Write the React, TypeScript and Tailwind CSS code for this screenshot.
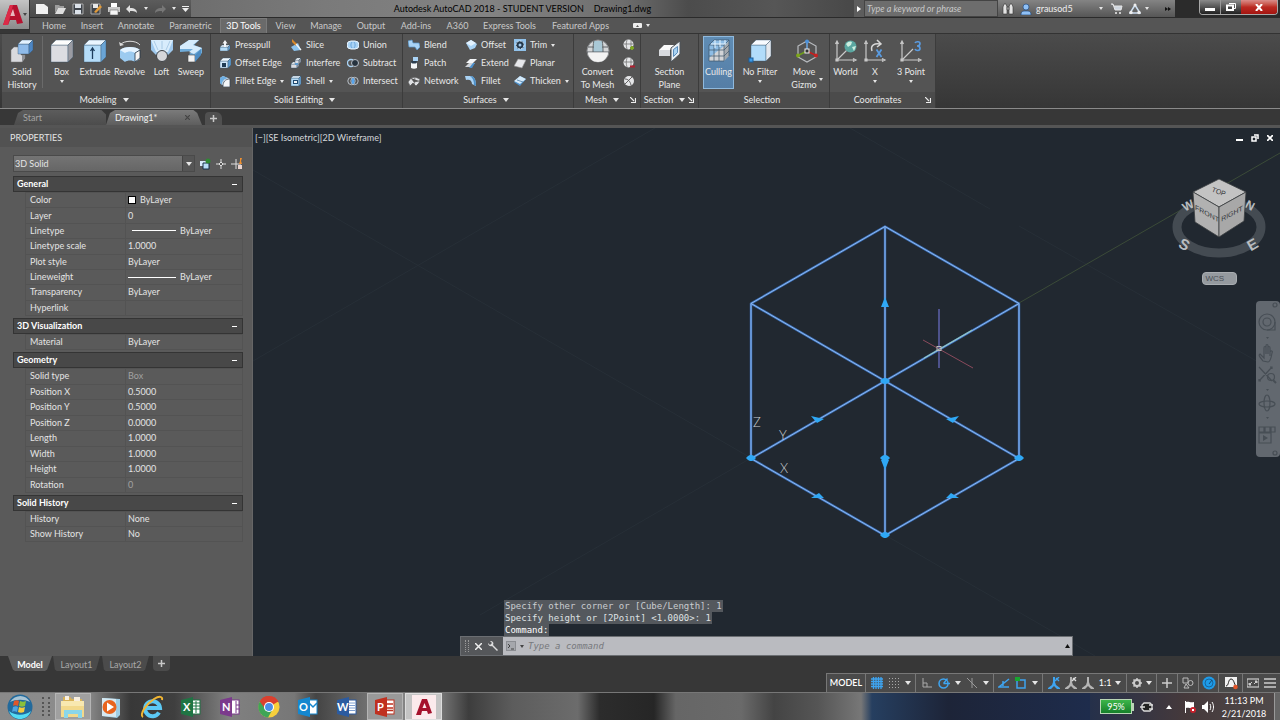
import React from "react";

type Kids = { children?: React.ReactNode };

const L = "#f4f6f8";
const G = "#b9c0c8";
const B = "#a9d3f5";
const D = "#5b9bd0";

function Svg({ s = 24, children }: Kids & { s?: number }) {
  const size = s === 24 ? "h-6 w-6" : s === 12 ? "h-3 w-3" : "h-3.5 w-3.5";
  return (
    <svg viewBox={`0 0 ${s} ${s}`} className={`${size} shrink-0`} aria-hidden="true">
      {children}
    </svg>
  );
}

function Block({ x, y, w, h, d, c }: { x: number; y: number; w: number; h: number; d: number; c: string[] }) {
  return (
    <g stroke="#33506b" strokeWidth=".4">
      <path d={`M${x} ${y + d}h${w}v${h}h${-w}z`} fill={c[0]} />
      <path d={`M${x} ${y + d}l${d} ${-d}h${w}l${-d} ${d}z`} fill={c[1]} />
      <path d={`M${x + w} ${y + d}l${d} ${-d}v${h}l${-d} ${d}z`} fill={c[2]} />
    </g>
  );
}
const white = ["#dcdde2", "#fdfdfd", "#9a9ba2"];
const blue = ["#b5dcf8", "#eaf6ff", "#6aa5d6"];

const big: Record<string, React.ReactNode> = {
  history: (
    <>
      <path d="M1 11l3-3h7v8h4v3l-3 4H1z" fill="#d9dade" stroke="#777" strokeWidth=".5" />
      <path d="M12 23l3-4v-3h-3z" fill="#8e9096" />
      <Block x={8} y={1} w={11} h={10} d={4} c={["#8fbbea", "#e3f2ff", "#4d86c4"]} />
    </>
  ),
  box: <Block x={1} y={1} w={17} h={17} d={5} c={white} />,
  extrude: (
    <>
      <Block x={1} y={1} w={17} h={17} d={5} c={blue} />
      <path d="M9.500 20V10M7.500 12l2-3 2 3" stroke="#1d3c5c" strokeWidth="1.300" fill="none" />
    </>
  ),
  revolve: (
    <>
      <path d="M2 6C6 1 18 1 22 6" fill="none" stroke="#ddd" strokeWidth="1" />
      <path d="M1 3l1 4 4-1z" fill="#ddd" />
      <path d="M2 11c4-4 16-4 20 0v9l-5 3c-2-2-8-2-10 0l-5-4z" fill="#9ccbf0" />
      <path d="M2 11c4-4 16-4 20 0l-5 3c-3-2-7-2-10 0z" fill="#e4f3ff" />
      <path d="M17 14l5-3v8l-5 4z" fill="#f4f4f4" stroke="#234" strokeWidth=".8" />
    </>
  ),
  loft: (
    <>
      <path d="M1 1h22v10l-6 6H7l-6-6z" fill="#9fc9ee" />
      <path d="M1 1h22l-5 12H6z" fill="#d8ecfc" />
      <path d="M4 2l4 9M20 2l-4 9M12 2v8" stroke="#9fc3e0" strokeWidth=".8" />
      <circle cx="12" cy="17" r="5.500" fill="#d5d7db" stroke="#3f4347" strokeWidth="1" />
    </>
  ),
  sweep: (
    <>
      <path d="M1 7l9-6h10l-5 5 8 3v5l-8 8-5-7 5-3-14 1z" fill="#70acd9" />
      <path d="M1 7l9-6h10l-6 5 9 3-8 6-5-2 4-3-13 0z" fill="#d4ebfc" />
      <path d="M9 16h7v7H9z" fill="#f4f4f4" stroke="#444" strokeWidth=".6" />
      <path d="M16 16l6-6v6l-6 7z" fill="#4f8ec4" />
    </>
  ),
  mesh: (
    <>
      <circle cx="12" cy="12" r="11" fill="#d4d6d8" stroke="#8b8d90" strokeWidth="1" />
      <path d="M8 2h8l1 11H7z" fill="#a9c8d6" />
      <path d="M2 8h6M16 8h6M1 13h22M8 1C7 6 7 9 7 13M16 1c1 5 1 8 1 12" stroke="#555a5e" strokeWidth=".9" fill="none" />
      <path d="M2 13.500h20C21 20 17 23 12 23S3 20 2 13.500z" fill="#f3f3f3" />
    </>
  ),
  section: (
    <>
      <path d="M1 11l5-5h11l-5 5v6H1z" fill="#fafafa" />
      <path d="M1 11h11v6H1z" fill="#d8dade" />
      <path d="M13 9l9-7v13l-9 8z" fill="#e9eff5" stroke="#4d5358" strokeWidth="1" />
      <path d="M15.500 10.500l4-3v6l-4 4z" fill="#a8d2f3" stroke="#3d77ad" strokeWidth=".8" />
    </>
  ),
  culling: (
    <>
      <path d="M2 6l5-5h15v15l-5 6H2z" fill="#9bcaf3" opacity=".8" />
      <path d="M2 22v-3l15-12v15z" fill="#d2d4d7" />
      <path d="M17 7l5-5v15l-5 5z" fill="#a4a9ae" />
      <path d="M2 6h15v16H2zM7 1h15v16M17 6l5-5M2 6l5-5M7 6v16M12 6v16M2 11h15l5-5M2 17h15l5-5" stroke="#3e5568" strokeWidth=".7" fill="none" />
      <path d="M8 1v8M13 1v7M18 1v4M4 5h15" stroke="#e6f4ff" strokeWidth="1" />
    </>
  ),
  filter: (
    <>
      <Block x={3} y={1} w={15} h={16} d={5} c={["#b2dcfa", "#f8fbff", "#e4e8ee"]} />
      <rect x="1" y="19" width="4" height="4" fill="#3e9be8" stroke="#1b5c99" />
    </>
  ),
  gizmo: (
    <>
      <path d="M12 2l9 5v11l-9 5-9-5V7zM12 2v10" fill="none" stroke="#b9bcc0" strokeWidth="1.200" />
      <path d="M12 4v7" stroke="#4c93dd" strokeWidth="1.200" />
      <circle cx="12" cy="2.500" r="2" fill="#4c93dd" />
      <path d="M12 12l-8 4" stroke="#6f9f1a" strokeWidth="1.500" />
      <path d="M12 12l8 4" stroke="#c21f1f" strokeWidth="1.500" />
      <circle cx="3" cy="16.500" r="2" fill="#7ea61b" />
      <circle cx="21" cy="16.500" r="2" fill="#c42222" />
      <rect x="10" y="10" width="4" height="4" fill="#333" stroke="#f0f0f0" strokeWidth="1" />
    </>
  ),
};
const axes = (
  <path d="M3 4v17h17M3 21l11-11M1.500 5L3 2l1.500 3M19 19.500l3 1.500-3 1.500M2 20h2v2H2z" fill="none" stroke="#c9c9c9" strokeWidth="1.200" />
);
big.world = (
  <>
    {axes}
    <circle cx="16.500" cy="7.500" r="6" fill="#5aa6a0" />
    <path d="M12 5c2-3 5-3 6-2l-1 3-3 2zM18 8l4-1-2 5z" fill="#cdeee0" />
  </>
);
big.axisX = (
  <>
    <path d="M3 4v17h17M1.500 5L3 2l1.500 3M19 19.500l3 1.500-3 1.500M2 20h2v2H2z" fill="none" stroke="#c9c9c9" strokeWidth="1.200" />
    <path d="M9 12c-2-6 3-8 8-7M14 1l4 4-4 3" fill="none" stroke="#d7d7d7" strokeWidth="1.500" />
    <path d="M13.500 10.500l5 7.500M18.500 10.500l-5 7.500" stroke="#5a9be0" strokeWidth="1.800" />
  </>
);
big.three = (
  <>
    {axes}
    <path d="M16 4c1-2 5-1.500 5 .5S19 7 18 7c2 0 3 1 3 2.500C21 12 17 12 16 10" fill="none" stroke="#5a9be0" strokeWidth="1.600" />
  </>
);

const small: Record<string, React.ReactNode> = {
  presspull: (
    <>
      <Block x={1} y={6} w={8} h={4} d={2} c={blue} />
      <path d="M3.500 4.500L6 1l2.500 3.500H7V8H5V4.500z" fill={L} />
    </>
  ),
  offsetEdge: (
    <>
      <Block x={1} y={1} w={8} h={7} d={3} c={["#cfe7fa", "#eef8ff", D]} />
      <rect x="3" y="6" width="4" height="4" fill="#1f3b55" />
    </>
  ),
  filletEdge: (
    <>
      <path d="M1 3l3-2 7 3v8H6L1 8z" fill="#dfe3e8" />
      <path d="M4 11C4 7 6 4 11 4v8H4z" fill={L} stroke="#2f4153" strokeWidth=".7" />
      <path d="M1 3l3-2 5 2C5 4 3 6 3 10L1 8z" fill="#6eaee2" />
    </>
  ),
  slice: (
    <>
      <path d="M1 8l7-4 3 7-7 1z" fill="#8cc3ee" />
      <path d="M2 0l5 5-1 2-4-4z" fill="#d9892b" />
      <path d="M6 5l5 6" stroke={L} strokeWidth="1.200" />
    </>
  ),
  interfere: (
    <>
      <Block x={1} y={5} w={6} h={4} d={2} c={white} />
      <Block x={5} y={1} w={4} h={4} d={2} c={white} />
      <rect x="5" y="6" width="3" height="2" fill="#5c9ad0" />
    </>
  ),
  shell: (
    <>
      <Block x={1} y={1} w={8} h={8} d={2} c={blue} />
      <rect x="3" y="5" width="5" height="4" fill="#204a70" />
      <rect x="4" y="6" width="3" height="2" fill={L} />
    </>
  ),
  union: (
    <>
      <path d="M4 2h4a4 4 0 010 8H4a4 4 0 010-8z" fill={B} stroke="#e9f5ff" strokeWidth="1" />
      <path d="M5 3c-1.500 2-1.500 4 0 6M7 3c1.500 2 1.500 4 0 6" fill="none" stroke="#5a9bd4" strokeWidth=".8" />
    </>
  ),
  subtract: (
    <>
      <circle cx="4" cy="6" r="3.500" fill="none" stroke={B} strokeWidth="1.300" />
      <circle cx="8" cy="6" r="3.500" fill="#26323e" stroke={G} strokeWidth="1" />
    </>
  ),
  intersect: (
    <>
      <circle cx="4.500" cy="6" r="3.700" fill="none" stroke={G} strokeWidth="1" />
      <circle cx="7.500" cy="6" r="3.700" fill="none" stroke={G} strokeWidth="1" />
      <ellipse cx="6" cy="6" rx="1.500" ry="3" fill="#58a6ee" />
    </>
  ),
  blend: <path d="M0 2l4-1 1 3 6 0 1 4-3 3-2-3-6 0z" fill={B} stroke={D} strokeWidth=".7" />,
  patch: (
    <>
      <path d="M3 5h6v6c-2 1-4 1-6 0z" fill={L} />
      <ellipse cx="6" cy="5" rx="3" ry="1.500" fill="#2c3e4f" />
      <path d="M5 0h5v4H5z" fill={B} />
    </>
  ),
  network: <path d="M0 7l3-4 4-1 5 2-1 4-3 3-3-3-3 3zM3 3l3 4 5-1M7 2l-1 8" fill="#dfe1e4" stroke="#555" strokeWidth=".7" />,
  offset: (
    <>
      <path d="M1 4l5-3 6 4-2 4-5 2z" fill={B} />
      <path d="M1 4l5-3 5 3-5 3z" fill="#e2f2ff" />
    </>
  ),
  extend: (
    <>
      <path d="M5 2h7L8 6H1z" fill={L} />
      <path d="M4 6h6l-4 4H0z" fill="#cfd3d8" />
      <path d="M8 6h2l-3 5H4z" fill="#4c90cc" />
    </>
  ),
  fillet: (
    <>
      <path d="M0 1h5c4 0 6 3 6 10l-4-2C7 5 4 4 1 5z" fill={B} />
      <path d="M5 1c4 0 6 3 6 10l-2-1c0-4-1-7-4-9z" fill="#4e90c8" />
    </>
  ),
  trim: (
    <>
      <rect x="0" y="0" width="12" height="12" fill="#90c1ea" />
      <circle cx="6" cy="6" r="4" fill="#24384b" stroke="#dceefc" strokeDasharray="2 1" />
      <circle cx="6" cy="6" r="1.500" fill="#a3ccef" />
    </>
  ),
  planar: <path d="M4 2l8 1-4 8-8-2z" fill="#e6e7ea" stroke="#888" strokeWidth=".6" />,
  thicken: (
    <>
      <path d="M0 7l6-6 6 3-6 7z" fill="#4f92cc" />
      <path d="M0 6l6-5 6 3-6 5z" fill="#d5eafa" />
      <path d="M3 5l6 2" stroke="#3e6f9b" strokeWidth=".7" />
    </>
  ),
  smoothMore: (
    <>
      <circle cx="5.500" cy="5.500" r="5" fill="#e5e6e8" />
      <path d="M1 5h9M4 1c-1 3-1 6 0 9M8 1v9" stroke="#666" strokeWidth=".7" fill="none" />
      <path d="M7 9h4M9 7v4" stroke="#7fa628" strokeWidth="2" />
    </>
  ),
  smoothLess: (
    <>
      <circle cx="5.500" cy="5.500" r="5" fill="#e5e6e8" />
      <path d="M1 5h9M4 1c-1 3-1 6 0 9M8 1v9" stroke="#666" strokeWidth=".7" fill="none" />
      <path d="M7 9.500h5" stroke="#b02030" strokeWidth="2" />
    </>
  ),
  refine: (
    <>
      <circle cx="6" cy="6" r="5" fill="#e5e6e8" />
      <path d="M2 4c3 0 5 2 6 6M11 0L0 11" stroke="#555" strokeWidth=".9" fill="none" />
    </>
  ),
};

function Caret() {
  return (
    <svg viewBox="0 0 6 4" className="h-1 w-1.5 shrink-0" aria-hidden="true">
      <path d="M0 0h6L3 4z" fill="#e6e6e6" />
    </svg>
  );
}
function TinyCaret({ dark }: { dark?: boolean }) {
  return (
    <svg viewBox="0 0 4 3" className="h-[3px] w-1 shrink-0" aria-hidden="true">
      <path d="M0 0h4L2 3z" fill={dark ? "#444" : "#e6e6e6"} />
    </svg>
  );
}

function BigButton({ icon, label, width, arrow, active }: { icon: string; label: string[]; width: string; arrow?: "down" | "side"; active?: boolean }) {
  return (
    <button
      type="button"
      className={`flex h-[53px] shrink-0 flex-col items-center pt-0.5 leading-[13px] ${width} ${active ? "border border-[#8fb9dd] bg-linear-to-b from-[#5f8cb4] to-[#557ea6]" : "border border-transparent"}`}
    >
      <Svg>{big[icon]}</Svg>
      <span className="mt-0.5 flex items-end gap-0.5 whitespace-nowrap">
        <span>
          {label.map((t) => (
            <span key={t} className="block text-center">
              {t}
            </span>
          ))}
        </span>
        {arrow === "side" && <span className="mb-2.5"><TinyCaret /></span>}
      </span>
      {arrow === "down" && <span className="mt-0.5"><TinyCaret /></span>}
    </button>
  );
}

function SmallButton({ icon, label, arrow }: { icon: string; label?: string; arrow?: boolean }) {
  return (
    <button type="button" aria-label={label ?? icon} className="flex h-[18px] items-center gap-1 whitespace-nowrap">
      <Svg s={12}>{small[icon]}</Svg>
      {label}
      {arrow && <TinyCaret />}
    </button>
  );
}

function Panel({ title, width, arrow, launcher, children }: Kids & { title: string; width: string; arrow?: boolean; launcher?: boolean }) {
  return (
    <section className={`flex shrink-0 flex-col border-r border-[#3c3c3c] bg-[#545454] ${width}`}>
      <div className="flex h-[58px] pt-0.5">{children}</div>
      <h2 className="flex h-4 items-center bg-[#4b4b4b] pr-1 pb-px">
        <span className="flex flex-1 items-center justify-center gap-1.5">
          {title}
          {arrow && <Caret />}
        </span>
        {launcher && (
          <svg viewBox="0 0 6 6" className="h-1.5 w-1.5" aria-hidden="true">
            <path d="M0 0l4 4M5.500 1v4.500H1" stroke="#eee" strokeWidth="1.200" fill="none" />
          </svg>
        )}
      </h2>
    </section>
  );
}

type Small = [string, string, boolean?];
function Column({ items, width }: { items: Small[]; width: string }) {
  return (
    <div className={`flex shrink-0 flex-col ${width}`}>
      {items.map(([i, l, a]) => (
        <SmallButton key={l} icon={i} label={l} arrow={a} />
      ))}
    </div>
  );
}

function Ribbon() {
  return (
    <div className="flex h-[75px] border-b border-[#8a8a8a] bg-linear-to-b from-[#4b4b4b] to-[#363636] pl-0.5 text-[9px] text-[#e8e8e8]">
      <Panel title="Modeling" width="w-[209px]" arrow>
        <BigButton icon="history" label={["Solid", "History"]} width="w-10" />
        <div className="mr-0.5 h-[52px] w-px bg-[#6a6a6a]" />
        <BigButton icon="box" label={["Box"]} width="w-[33px]" arrow="down" />
        <BigButton icon="extrude" label={["Extrude"]} width="w-[34px]" />
        <BigButton icon="revolve" label={["Revolve"]} width="w-[35px]" />
        <BigButton icon="loft" label={["Loft"]} width="w-[29px]" />
        <BigButton icon="sweep" label={["Sweep"]} width="w-[30px]" />
      </Panel>
      <Panel title="Solid Editing" width="w-[192px]" arrow>
        <div className="flex pl-2">
          <Column width="w-[71px]" items={[["presspull", "Presspull"], ["offsetEdge", "Offset Edge"], ["filletEdge", "Fillet Edge", true]]} />
          <Column width="w-[57px]" items={[["slice", "Slice"], ["interfere", "Interfere"], ["shell", "Shell", true]]} />
          <Column width="w-14" items={[["union", "Union"], ["subtract", "Subtract"], ["intersect", "Intersect"]]} />
        </div>
      </Panel>
      <Panel title="Surfaces" width="w-[171px]" arrow>
        <div className="flex pl-[5px]">
          <Column width="w-[57px]" items={[["blend", "Blend"], ["patch", "Patch"], ["network", "Network"]]} />
          <Column width="w-[49px]" items={[["offset", "Offset"], ["extend", "Extend"], ["fillet", "Fillet"]]} />
          <Column width="w-14" items={[["trim", "Trim", true], ["planar", "Planar"], ["thicken", "Thicken", true]]} />
        </div>
      </Panel>
      <Panel title="Mesh" width="w-[67px]" arrow launcher>
        <BigButton icon="mesh" label={["Convert", "To Mesh"]} width="w-[47px]" />
        <div className="flex flex-col pl-0.5">
          <SmallButton icon="smoothMore" />
          <SmallButton icon="smoothLess" />
          <SmallButton icon="refine" />
        </div>
      </Panel>
      <Panel title="Section" width="w-[58px]" arrow launcher>
        <BigButton icon="section" label={["Section", "Plane"]} width="w-[57px]" />
      </Panel>
      <Panel title="Selection" width="w-[131px]">
        <div className="flex pl-1">
          <BigButton icon="culling" label={["Culling"]} width="w-[31px]" active />
          <BigButton icon="filter" label={["No Filter"]} width="w-[52px]" arrow="down" />
          <BigButton icon="gizmo" label={["Move", "Gizmo"]} width="w-[42px]" arrow="side" />
        </div>
      </Panel>
      <Panel title="Coordinates" width="w-[106px]" launcher>
        <BigButton icon="world" label={["World"]} width="w-[31px]" />
        <BigButton icon="axisX" label={["X"]} width="w-7" arrow="down" />
        <BigButton icon="three" label={["3 Point"]} width="w-[44px]" arrow="down" />
      </Panel>
    </div>
  );
}

function QuickAccess() {
  return (
    <div className="flex w-[161px] shrink-0 items-center gap-1.5 bg-linear-to-b from-[#5c5c5c] to-[#4a4a4a] pl-1.5">
      <button type="button" aria-label="New"><Svg s={12}><path d="M0 1h8l4 3v7H0z" fill="#f1f1f1" /></Svg></button>
      <button type="button" aria-label="Open"><Svg s={12}><path d="M1 2h4l1 1h4v2H4l-3 5z" fill="#9d9d9d" /><path d="M4 5h8l-3 6H1z" fill="#dedede" /></Svg></button>
      <button type="button" aria-label="Save"><Svg s={12}><path d="M1 1h10v10H1z" fill="#3f444b" stroke="#aaa" /><path d="M3 1h6v4H3zM3 7h6v4H3z" fill="#dce2ea" /></Svg></button>
      <button type="button" aria-label="Save As"><Svg s={12}><path d="M1 1h9v10H1z" fill="#3f444b" stroke="#aaa" /><path d="M3 1h5v4H3z" fill="#e8e8e8" /><path d="M4 9l6-7 2 2-6 6z" fill="#e09a3a" /></Svg></button>
      <button type="button" aria-label="Plot"><Svg s={12}><path d="M3 0h6v4H3z" fill="#fff" /><path d="M0 4h12v5H0z" fill="#c9c9c9" /><path d="M2 7h8v5H2z" fill="#f5f5f5" stroke="#666" strokeWidth=".6" /></Svg></button>
      <button type="button" aria-label="Undo" className="flex items-center gap-1.5"><Svg s={12}><path d="M4 2v3c5 0 7 2 7 5-2-2-4-2-7-2v2L0 6z" fill="#e0e0e0" /></Svg><TinyCaret /></button>
      <button type="button" aria-label="Redo" className="flex items-center gap-1.5"><Svg s={12}><path d="M8 2v3c-5 0-7 2-7 5 2-2 4-2 7-2v2l4-4z" fill="#777" /></Svg><TinyCaret /></button>
      <button type="button" aria-label="Customize"><svg viewBox="0 0 7 6" className="h-1.5 w-[7px]"><path d="M0 0h7v1H0zM0 2h7L3.500 6z" fill="#eee" /></svg></button>
    </div>
  );
}

function TitleBar() {
  return (
    <div className="flex h-[18px] border-b border-[#2b2b2b]">
      <QuickAccess />
      <div className="flex flex-1 items-center justify-center gap-2.5 bg-[linear-gradient(90deg,#6e6e6e_0%,#7a7a7a_20%,#838383_45%,#6e6e6e_65%,#4c4c4c_75%,#565656_88%,#484848_100%)] text-[9px] whitespace-pre text-black">
        <span>Autodesk AutoCAD 2018 - STUDENT VERSION</span>
        <span>Drawing1.dwg</span>
      </div>
      <button type="button" aria-label="Collapse search" className="flex w-2.5 items-center justify-center bg-[#5d5d5d]">
        <svg viewBox="0 0 4 6" className="h-1.5 w-1"><path d="M0 0l4 3-4 3z" fill="#fff" /></svg>
      </button>
      <input aria-label="Search" placeholder="Type a keyword or phrase" className="w-[134px] border border-[#444] bg-[#6d6d6d] px-0.5 text-[9px] text-white italic placeholder:text-[#c8c8c8]" />
      <div className="flex w-[177px] items-center bg-linear-to-b from-[#848484] to-[#565656] pl-1 text-[9px] text-[#eee]">
        <button type="button" aria-label="Find" className="w-[18px]"><Svg s={12}><path d="M1 4l1-3h2l1 3v7H1zM7 4l1-3h2l1 3v7H7zM5 4h2v3H5z" fill="#e3e3e3" stroke="#333" strokeWidth=".6" /></Svg></button>
        <button type="button" className="flex flex-1 items-center gap-1"><Svg s={12}><circle cx="6" cy="4" r="3" fill="#8fc0f5" stroke="#224a80" strokeWidth=".7" /><path d="M1 12c0-4 2-4 5-4s5 0 5 4z" fill="#8fc0f5" stroke="#224a80" strokeWidth=".7" /></Svg><span className="flex-1 text-left">grausod5</span><TinyCaret /></button>
        <button type="button" aria-label="Store" className="ml-2"><Svg s={12}><path d="M0 1h2l2 6h6l1-4H3" fill="#cfd6df" stroke="#e6e6e6" /><circle cx="5" cy="10" r="1" fill="#eee" /><circle cx="9" cy="10" r="1" fill="#eee" /></Svg></button>
        <button type="button" aria-label="Connect" className="ml-1.5 flex items-center gap-1"><Svg s={12}><path d="M6 2l5 8H1z" fill="none" stroke="#cfe0f2" strokeWidth="1.500" /><circle cx="6" cy="2" r="1.500" fill="#eee" /><circle cx="2" cy="9.500" r="1.700" fill="#eee" /><circle cx="10" cy="9.500" r="1.700" fill="#eee" /></Svg><TinyCaret /></button>
        <button type="button" aria-label="More" className="mr-1 ml-4"><svg viewBox="0 0 6 4" className="h-1 w-1.5"><path d="M0 0l3 2-3 2zM3 0l3 2-3 2z" fill="#111" /></svg></button>
      </div>
      <div className="flex w-[105px] justify-end bg-[#2b2b2b] pr-0.5">
        <div className="flex h-[15px] overflow-hidden rounded-b border-x border-b border-[#a8a8a8]">
          <button type="button" aria-label="Minimize" className="flex w-[21px] items-center justify-center border-r border-[#999] bg-linear-to-b from-[#8b8b8b] via-[#555] to-[#222]"><span className="mt-1 h-[3px] w-2.5 bg-white" /></button>
          <button type="button" aria-label="Restore" className="flex w-5 items-center justify-center bg-linear-to-b from-[#8b8b8b] via-[#555] to-[#222]"><svg viewBox="0 0 10 8" className="h-2 w-2.5"><path d="M3 .5h6.500v5H8" fill="none" stroke="#fff" /><path d="M1 2.500h6v4.500H1z" fill="#444" stroke="#fff" strokeWidth="2" /></svg></button>
          <button type="button" aria-label="Close" className="flex w-9 items-center justify-center bg-linear-to-b from-[#d98d8a] via-[#bb2a22] to-[#a41410]"><svg viewBox="0 0 8 7" className="h-[7px] w-2"><path d="M1 0l6 7M7 0L1 7" stroke="#fff" strokeWidth="2" /></svg></button>
        </div>
      </div>
    </div>
  );
}

const ribbonTabs: [string, string][] = [
  ["Home", "w-[38px]"], ["Insert", "w-[38px]"], ["Annotate", "w-[50px]"], ["Parametric", "w-[59px]"], ["3D Tools", "w-[47px]"], ["View", "w-[37px]"],
  ["Manage", "w-[44px]"], ["Output", "w-[46px]"], ["Add-ins", "w-[44px]"], ["A360", "w-[39px]"], ["Express Tools", "w-[65px]"], ["Featured Apps", "w-[77px]"],
];

function Header() {
  return (
    <header className="relative">
      <div className="flex">
        <button type="button" aria-label="Application menu" className="z-10 -mb-1 flex h-[30px] w-[30px] shrink-0 items-center justify-center border-r border-b border-[#333] bg-linear-to-b from-[#c4c4c4] to-[#8b8b8b]">
          <svg viewBox="0 0 20 22" className="h-[22px] w-5 shrink-0"><path d="M0 21L7 1h7l6 18-6 1-1-4H7l-2 5z" fill="#b5122f" /><path d="M10 5l2 7H7z" fill="#e8b9bf" /><path d="M0 21L7 1h3L5 21z" fill="#dc2b48" /></svg>
          <TinyCaret dark />
        </button>
        <div className="min-w-0 flex-1">
          <TitleBar />
          <nav className="flex h-[15px] items-stretch bg-[#555] pl-[5px] text-[9px] text-[#c9c9c9]">
            {ribbonTabs.map(([t, w]) => (
              <button key={t} type="button" className={`flex shrink-0 items-center justify-center whitespace-nowrap ${w} ${t === "3D Tools" ? "border-x border-t border-[#7a7a7a] bg-[#6a6a6a] text-white" : ""}`}>
                {t}
              </button>
            ))}
            <button type="button" aria-label="Minimize ribbon" className="ml-3.5 flex items-center gap-1">
              <svg viewBox="0 0 9 5" className="h-[5px] w-[9px]"><rect width="9" height="5" rx="1" fill="#eee" /><path d="M3 4h3L4.500 2z" fill="#555" /></svg>
              <TinyCaret />
            </button>
          </nav>
        </div>
      </div>
      <div className="border-t border-[#333]"><Ribbon /></div>
    </header>
  );
}

function FileTabs() {
  return (
    <nav className="flex h-4 items-end bg-[#373737] pl-3.5 text-[9px] text-[#a5a5a5]">
      <button type="button" className="h-[15px] w-[92px] bg-linear-to-b from-[#5c5c5c] to-[#4c4c4c] pl-[9px] text-left [clip-path:polygon(0_100%,4px_20%,9px_0,95%_0,100%_30%,100%_100%)]">Start</button>
      <button type="button" className="flex h-[15px] w-[96px] items-center bg-linear-to-b from-[#7b7b7b] to-[#5e5e5e] pr-3 pl-[9px] text-left text-[#f4f4f4] [clip-path:polygon(0_100%,4px_20%,9px_0,91%_0,95%_20%,100%_100%)]">
        <span className="flex-1">Drawing1*</span>
        <svg viewBox="0 0 5 5" className="h-[5px] w-[5px]"><path d="M0 0l5 5M5 0L0 5" stroke="#444" strokeWidth="1.200" /></svg>
      </button>
      <button type="button" aria-label="New drawing" className="ml-[3px] flex h-[13px] w-[17px] items-center justify-center rounded-tl rounded-tr-md bg-[#505050]"><Plus /></button>
    </nav>
  );
}
function Plus() {
  return <svg viewBox="0 0 7 7" className="h-[7px] w-[7px]"><path d="M3.500 0v7M0 3.500h7" stroke="#c8c8c8" strokeWidth="1.500" /></svg>;
}

type Row = [string, React.ReactNode, boolean?];
const sections: { title: string; height: string; rows: Row[] }[] = [
  {
    title: "General",
    height: "h-[124px]",
    rows: [
      ["Color", <span className="flex items-center gap-1"><span className="h-2 w-2 border border-black bg-white" />ByLayer</span>],
      ["Layer", "0"],
      ["Linetype", <span className="flex items-center gap-1"><span className="ml-1 h-px w-11 bg-white" />ByLayer</span>],
      ["Linetype scale", "1.0000"],
      ["Plot style", "ByLayer"],
      ["Lineweight", <span className="flex items-center gap-1"><span className="h-px w-12 bg-white" />ByLayer</span>],
      ["Transparency", "ByLayer"],
      ["Hyperlink", ""],
    ],
  },
  { title: "3D Visualization", height: "h-4", rows: [["Material", "ByLayer"]] },
  {
    title: "Geometry",
    height: "h-[125px]",
    rows: [["Solid type", "Box", true], ["Position X", "0.5000"], ["Position Y", "0.5000"], ["Position Z", "0.0000"], ["Length", "1.0000"], ["Width", "1.0000"], ["Height", "1.0000"], ["Rotation", "0", true]],
  },
  { title: "Solid History", height: "h-[31px]", rows: [["History", "None"], ["Show History", "No"]] },
];

function Properties() {
  return (
    <aside className="w-[253px] shrink-0 border-r border-[#666] bg-[#5a5a5a] text-[9px] text-[#e4e4e4]">
      <h2 className="flex h-[19px] items-center bg-[#525252] pl-2.5">PROPERTIES</h2>
      <div className="mt-2 flex h-[17px] items-center gap-1 pl-[13px]">
        <div className="relative flex h-full w-[182px] items-center border border-[#4a4a4a] bg-linear-to-b from-[#747474] to-[#666]">
          <select aria-label="Object type" className="h-full w-full appearance-none bg-transparent pl-px text-[#e4e4e4]"><option>3D Solid</option></select>
          <span className="pointer-events-none absolute inset-y-0 right-0 flex w-3 items-center justify-center border-l border-[#444] bg-[#555]"><Caret /></span>
        </div>
        <button type="button" aria-label="Toggle PICKADD"><Svg s={12}><path d="M1 3h6v5H1z" fill="#d8ecfb" /><path d="M4 5h6v6H4z" fill="#b9def7" stroke="#183048" /><circle cx="9" cy="3" r="2.500" fill="#2f8a35" /></Svg></button>
        <button type="button" aria-label="Select objects"><Svg s={12}><path d="M6 1v10M1 6h10" stroke="#ddd" /><path d="M6 4l2 2-2 2-2-2z" fill="#555" stroke="#ddd" /></Svg></button>
        <button type="button" aria-label="Quick select"><Svg s={12}><path d="M5 1v10M0 6h10" stroke="#ddd" /><path d="M9 0h2l-1 3 1 3H8l1-3z" fill="#f09030" /><rect x="7" y="7" width="4" height="4" fill="#e9d4cf" /></Svg></button>
      </div>
      <div className="mt-1 mr-[9px] ml-[13px] flex flex-col gap-0.5">
        {sections.map((s) => (
          <section key={s.title}>
            <h3>
              <button type="button" className="flex h-4 w-full items-center justify-between border border-[#343434] bg-[#484848] pr-[5px] pl-[3px] font-bold text-white">
                {s.title}
                <span className="h-px w-[5px] bg-white" />
              </button>
            </h3>
            <div className="pl-3">
              <table className={`w-full border-collapse ${s.height}`}>
                <tbody>
                  {s.rows.map(([k, v, dim]) => (
                    <tr key={k} className="border border-[#535353]">
                      <th scope="row" className="w-[100px] border-r border-[#535353] p-0 pl-1 text-left leading-3 font-normal">{k}</th>
                      <td className={`p-0 pl-0.5 leading-3 ${dim ? "text-[#a2a2a2]" : ""}`}>{v}</td>
                    </tr>
                  ))}
                </tbody>
              </table>
            </div>
          </section>
        ))}
      </div>
    </aside>
  );
}

function Drawing() {
  return (
    <svg className="absolute inset-0 h-full w-full" aria-label="Wireframe cube">
      <g transform="translate(-253 -128)">
        <g stroke="#272f37" strokeWidth="1">
          <path d="M253 170L751 458M253 361L655 128M480 615L751 458M1019 226L1260 363M990 209L850 128M885 535L1095 656" />
          <path d="M1019 303L1280 153" stroke="#3b4b38" />
        </g>
        <g fill="none" strokeLinejoin="round">
          {["#3c6fb5", "#8cb8f2"].map((c, i) => (
            <path key={c} stroke={c} strokeWidth={i === 0 ? 2.4 : 1} d="M885 226.500L1019 303.500V458.500L885 535.500L751 458.500V303.500ZM885 226.500V535.500M751 303.500L1019 458.500M1019 303.500L751 458.500" />
          ))}
        </g>
        <g fill="#2fa8f5">
          {[[885, 381], [751, 458], [1019, 458], [885, 458], [885, 535]].map(([x, y]) => (
            <path key={`${x}-${y}`} d={`M${x - 5} ${y}l2-2 2-1h2l2 1 2 2-2 2-2 1h-2l-2-1z`} />
          ))}
          <path d="M885 297l4 10h-8zM881 460h8l-4 10zM811 416l13 3-7 4zM959 416l-13 3 7 4zM811 498l13 0-5-5zM959 498l-13 0 5-5z" />
        </g>
        <path d="M939 309v59" stroke="#6265b4" strokeWidth="1.400" />
        <path d="M923 340l50 28" stroke="#8a4a5c" />
        <path d="M924 358l48-28" stroke="#9fd8b4" strokeWidth=".8" />
        <rect x="937" y="346.500" width="4" height="4" fill="none" stroke="#bbb" />
        <g fill="#c8ccd0" fontSize="13" className="font-[Lato] font-light">
          <text x="753" y="427">Z</text>
          <text x="779" y="440">Y</text>
          <text x="780" y="473">X</text>
        </g>
      </g>
    </svg>
  );
}

function ViewCube() {
  return (
    <svg viewBox="0 0 98 84" className="h-[84px] w-[98px] font-['Liberation_Sans',sans-serif]" aria-label="View cube">
      <ellipse cx="49" cy="51" rx="42" ry="26" fill="none" stroke="#444b52" strokeWidth="9" />
      <g fill="#b9bdc0" fontSize="15" fontWeight="700" textAnchor="middle">
        <text transform="translate(20 33) rotate(-28)" fontSize="12">W</text>
        <text transform="translate(78 33) rotate(28)" fontSize="12">N</text>
        <text transform="translate(12 73) rotate(28)">S</text>
        <text transform="translate(85 73) rotate(-30)">E</text>
      </g>
      <g stroke="#3a3d40" strokeWidth=".8">
        <path d="M49 3l27 13-27 15-26-15z" fill="#c3c3c3" />
        <path d="M23 16l26 15v30L25 46z" fill="#b1b1b1" />
        <path d="M76 16L49 31v30l25-16z" fill="#a8a8a8" />
      </g>
      <g fill="#33363a" fontSize="7" textAnchor="middle">
        <text transform="translate(48 18) rotate(20)">TOP</text>
        <text transform="translate(37 40) skewY(28)">FRONT</text>
        <text transform="translate(62 40) skewY(-28)">RIGHT</text>
      </g>
    </svg>
  );
}

function NavBar() {
  return (
    <div className="absolute top-[173px] right-0 flex h-[156px] w-6 flex-col items-center rounded-sm bg-[#62686f]">
      <svg viewBox="0 0 24 156" className="h-[156px] w-6" fill="none" stroke="#474e55" strokeWidth="1.200" aria-label="Navigation tools">
        <circle cx="19" cy="4" r="2" />
        <circle cx="11" cy="21" r="8" /><circle cx="11" cy="21" r="4" /><path d="M11 29h8v-8" />
        <path d="M7 60c-3-4-5-6-3-7l4 4V47c0-2 2-2 2 0v6-8c0-2 2-2 2 0v8-6c0-2 2-2 2 0v8-4c1-2 3-1 2 1-1 6-2 9-4 9zM3 66l13 14M16 66L3 80M14 66h2v2M3 78v2h2" />
        <circle cx="15" cy="76" r="3.500" /><path d="M17 79l3 3" strokeWidth="2" />
        <ellipse cx="11" cy="103" rx="8" ry="3" /><ellipse cx="11" cy="102" rx="3" ry="8" />
        <path d="M3 126h5v5H3zM9 126h5v5H9zM15 126h4v5h-4zM3 132h12v10H3z" />
        <path d="M7 134l5 3-5 3zM10 36h3l-1.500 2zM10 88h3l-1.500 2zM10 116h3l-1.500 2z" fill="#474e55" stroke="none" />
        <circle cx="19" cy="152" r="2" />
      </svg>
    </div>
  );
}

function CommandLine() {
  return (
    <div className="absolute right-[207px] bottom-0 left-[207px] font-['DejaVu_Sans_Mono',monospace] text-[9px]">
      <div className="flex flex-col items-start pl-11 leading-[12px] text-[#c9ccd0]">
        <span className="bg-[#54585d] px-px whitespace-pre">Specify other corner or [Cube/Length]: 1</span>
        <span className="bg-[#54585d] px-px whitespace-pre text-[#dfe1e3]">{"Specify height or [2Point] <1.0000>: 1"}</span>
        <span className="bg-[#54585d] px-px text-white">Command:</span>
      </div>
      <div className="flex h-5 border border-[#6b6e72] bg-[#babbc0]">
        <div className="flex w-[42px] items-center justify-between bg-[#55575a] pr-[5px] pl-1">
          <span className="h-3 w-1 border-x border-dotted border-[#999]" />
          <button type="button" aria-label="Close command line"><svg viewBox="0 0 7 7" className="h-[7px] w-[7px]"><path d="M0 0l7 7M7 0L0 7" stroke="#eee" strokeWidth="1.500" /></svg></button>
          <button type="button" aria-label="Customize"><svg viewBox="0 0 10 10" className="h-2.5 w-2.5"><path d="M0 2l2 2 2-2-2-2c3 0 4 2 3 4l5 5-1 1-5-5C2 6 0 4 0 2z" fill="#ddd" /></svg></button>
        </div>
        <div className="flex flex-1 items-center gap-1 pr-0.5 pl-[3px]">
          <svg viewBox="0 0 10 10" className="h-2.5 w-2.5"><rect x=".5" y=".5" width="9" height="9" fill="#a5a7ac" stroke="#8b8d92" /><path d="M2 3l2 2-2 2M5 8h3" fill="none" stroke="#444" /></svg>
          <TinyCaret dark />
          <input aria-label="Command" placeholder="Type a command" className="h-full min-w-0 flex-1 bg-transparent text-[#333] italic placeholder:text-[#77797d]" />
          <svg viewBox="0 0 5 4" className="h-1 w-[5px]"><path d="M0 4h5L2.500 0z" fill="#111" /></svg>
        </div>
      </div>
    </div>
  );
}

function Viewport() {
  return (
    <section className="relative min-w-0 flex-1 overflow-hidden bg-[#212830] text-[#d4d7da]">
      <Drawing />
      <div className="relative flex justify-between pt-[3px] pr-[7px] pl-0.5 text-[9px] leading-[13px]">
        <span>[−][SE Isometric][2D Wireframe]</span>
        <span className="flex items-center gap-2">
          <button type="button" aria-label="Minimize drawing" className="mt-1 h-0.5 w-[7px] bg-white" />
          <button type="button" aria-label="Restore drawing"><svg viewBox="0 0 8 8" className="h-2 w-2"><path d="M3 1h4v4M1 3h4v4H1z" fill="none" stroke="#fff" strokeWidth="1.500" /></svg></button>
          <button type="button" aria-label="Close drawing"><svg viewBox="0 0 6 6" className="h-1.5 w-1.5"><path d="M0 0l6 6M6 0L0 6" stroke="#fff" strokeWidth="1.700" /></svg></button>
        </span>
      </div>
      <div className="absolute top-12 right-3 flex flex-col items-center gap-3">
        <ViewCube />
        <button type="button" className="h-[13px] w-[35px] rounded-sm border border-[#a9adb1] bg-[#959a9f] pl-[3px] text-left font-['Liberation_Sans',sans-serif] text-[8px] leading-[11px] text-[#4a4f55]">WCS</button>
      </div>
      <NavBar />
      <CommandLine />
    </section>
  );
}

function StatusCell({ children, w }: Kids & { w: string }) {
  return <div className={`flex shrink-0 items-center justify-around border-t border-l border-[#777] bg-[#4a4a4a] px-0.5 ${w}`}>{children}</div>;
}
function SBtn({ label, children, s = 12 }: Kids & { label: string; s?: number }) {
  return <button type="button" aria-label={label}><Svg s={s}>{children}</Svg></button>;
}
function Figure({ c, mark }: { c: string; mark?: string }) {
  return (
    <>
      <path d="M5 0h2v5l1 3 4 3v1H9L6 9l-3 3H0v-1l4-3 1-3z" fill={c} />
      {mark && <path d="M7 4l4-4M8 1l3 3" stroke={mark} strokeWidth="1.400" />}
    </>
  );
}

function StatusArea() {
  return (
    <div className="flex h-9 bg-[#373737]">
      <nav className="flex h-4 flex-1 items-start pl-2 text-[9px] text-[#a9a9a9]">
        <button type="button" className="h-[15px] w-[44px] bg-[#5e5e5e] pt-0.5 font-bold text-white [clip-path:polygon(0_0,100%_0,89%_90%,84%_100%,16%_100%,11%_90%)]">Model</button>
        <button type="button" className="ml-px h-[15px] w-[47px] bg-[#4b4b4b] pt-0.5 [clip-path:polygon(0_0,100%_0,92%_90%,88%_100%,8%_100%,4%_90%)]">Layout1</button>
        <button type="button" className="ml-0.5 h-[15px] w-[47px] bg-[#4b4b4b] pt-0.5 [clip-path:polygon(0_0,100%_0,92%_90%,88%_100%,8%_100%,4%_90%)]">Layout2</button>
        <button type="button" aria-label="New layout" className="ml-1 flex h-[15px] w-[17px] items-center justify-center rounded-b bg-[#4b4b4b]"><Plus /></button>
      </nav>
      <div className="mt-[17px] flex h-[19px] text-[9px] text-white">
        <StatusCell w="w-[39px]"><button type="button" className="font-semibold">MODEL</button></StatusCell>
        <StatusCell w="w-[50px]">
          <SBtn label="Grid"><path d="M0 2h12M0 4.500h12M0 7h12M0 9.500h12M2.500 0v12M5 0v12M7.500 0v12M10 0v12" stroke="#3ea4f0" strokeWidth="1.300" /></SBtn>
          <SBtn label="Snap"><path d="M1 1.500h10M1 4.500h10M1 7.500h10M1 10.500h10" stroke="#a8a8a8" strokeDasharray="1 2" /></SBtn>
          <Caret />
        </StatusCell>
        <StatusCell w="w-[78px]">
          <SBtn label="Ortho"><path d="M2 1v9h9M2 6h4v4" fill="none" stroke="#aaa" /></SBtn>
          <SBtn label="Polar"><circle cx="5.500" cy="6.500" r="4.500" fill="none" stroke="#3ea4f0" strokeWidth="1.500" /><path d="M5.500 6.500H12M5.500 6.500l4-5" stroke="#3ea4f0" strokeWidth="1.300" /></SBtn>
          <Caret />
          <SBtn label="Isodraft"><path d="M1 1l10 10M6 1v10" stroke="#999" /></SBtn>
          <Caret />
        </StatusCell>
        <StatusCell w="w-[49px]">
          <SBtn label="Tracking"><path d="M11 2L1 10h10M5 4v5" fill="none" stroke="#3ea4f0" strokeWidth="1.500" /></SBtn>
          <SBtn label="Object snap"><rect x="2" y="3" width="8" height="8" fill="none" stroke="#3ea4f0" strokeWidth="1.500" /><rect x="0" y="0" width="5" height="4" fill="#18a530" /></SBtn>
          <Caret />
        </StatusCell>
        <StatusCell w="w-[84px]">
          <SBtn label="Annotation visibility"><Figure c="#3ea4f0" mark="#3ea4f0" /></SBtn>
          <SBtn label="Auto scale"><Figure c="#b5b5b5" mark="#ddd" /></SBtn>
          <SBtn label="Annotation scale"><Figure c="#b5b5b5" /></SBtn>
          <button type="button" className="flex items-center gap-1">1:1<Caret /></button>
        </StatusCell>
        <StatusCell w="w-[30px]">
          <SBtn label="Workspace"><circle cx="6" cy="6" r="3" fill="none" stroke="#ccc" strokeWidth="2" /><path d="M6 1v2M6 9v2M1 6h2M9 6h2M2.500 2.500l1 1M8.500 8.500l1 1M9.500 2.500l-1 1M3.500 8.500l-1 1" stroke="#ccc" strokeWidth="1.500" /></SBtn>
          <Caret />
        </StatusCell>
        <StatusCell w="w-[21px]"><SBtn label="Annotation monitor"><path d="M6 1v10M1 6h10" stroke="#ccc" strokeWidth="1.500" /></SBtn></StatusCell>
        <StatusCell w="w-[21px]"><SBtn label="Isolate objects"><path d="M1 1h5v5H1zM4 7l3 4H2z" fill="none" stroke="#bbb" /><circle cx="8.500" cy="6" r="2.500" fill="none" stroke="#bbb" /></SBtn></StatusCell>
        <StatusCell w="w-5"><SBtn label="Hardware acceleration" s={14}><circle cx="7" cy="7" r="6.500" fill="#1e9be8" /><circle cx="7" cy="7" r="4" fill="none" stroke="#17669c" /><path d="M7 8l3-4" stroke="#174a70" /></SBtn></StatusCell>
        <StatusCell w="w-6"><SBtn label="Graphics" s={14}><rect x="1" y="1" width="12" height="10" fill="#f2f2f2" /><path d="M2 10c3 0 2-7 5-7s3 5 5 7" fill="none" stroke="#222" /><circle cx="11.500" cy="11" r="2.300" fill="#e2562a" /></SBtn></StatusCell>
        <StatusCell w="w-[38px]">
          <SBtn label="Clean screen"><rect x="0" y="2" width="12" height="8" fill="none" stroke="#ccc" strokeWidth="1.200" /><path d="M2 8V6l2 2zM10 4v2L8 4zM3 7l2-2M9 5L7 7" fill="#ccc" stroke="#ccc" /></SBtn>
          <SBtn label="Customization"><path d="M0 2h12M0 6h12M0 10h12" stroke="#ccc" strokeWidth="1.500" /></SBtn>
        </StatusCell>
      </div>
    </div>
  );
}

function Office({ c, letter, x = 3, children }: Kids & { c: string; letter: string; x?: number }) {
  return (
    <svg viewBox="0 0 22 20" className="h-5 w-[22px]" aria-hidden="true">
      <rect x="11" y="3" width="9" height="14" fill="#fff" stroke={c} />
      {children}
      <path d="M1 3l12-3v20L1 17z" fill={c} />
      <text x={x} y="14" fontSize="11" fontWeight="700" fill="#fff">{letter}</text>
    </svg>
  );
}

function Taskbar() {
  const item = "flex h-full w-[39px] shrink-0 items-center justify-center";
  return (
    <footer className="flex h-7 items-center border-t border-[#777] bg-[#333] text-white">
      <div className="flex h-full min-w-0 flex-1 bg-[linear-gradient(90deg,#8a8a8a_0%,#8c8c8c_8%,#383838_12%,#3f3f3f_16%,#808080_21%,#777_27%,#444_29%,#858585_36%,#808080_40%,#3d3d3d_43%,#5c5c5c_47%,#6c6c6c_53%,#2c2c2c_55%,#262626_60%,#666_62%,#6a6a6a_68%,#444_71%,#555_75%,#777_79%,#263f60_80%,#1d2438_87%,#1e2c4c_100%)]">
        <button type="button" aria-label="Start" className="flex w-10 items-center justify-center">
          <svg viewBox="0 0 26 26" className="h-[26px] w-[26px]"><circle cx="13" cy="13" r="12.500" fill="#226a9c" /><path d="M2 17c6 5 16 5 22 0-2 6-7 8-11 8S4 23 2 17z" fill="#54dcf4" /><path d="M3 8c5-8 16-8 20 0-6-3-14-3-20 0z" fill="#a8c4d4" /><path d="M7 7c2-1 4-1 5 0l-1 5c-2-1-4-1-5 0z" fill="#e0572a" /><path d="M13 7c2 1 4 1 6 0l-1 5c-2 1-4 1-6 0z" fill="#8ac03a" /><path d="M6 13c2-1 4-1 5 0l-1 5c-2-1-4-1-5 0z" fill="#4da4e2" /><path d="M12 13c2 1 4 1 6 0l-1 5c-2 1-4 1-6 0z" fill="#f6cb3b" /></svg>
        </button>
        <span className="my-1 ml-0.5 w-2 border-x-2 border-dotted border-[#555]" />
        <button type="button" aria-label="File Explorer" className="ml-[5px] flex w-9 items-center justify-center border border-[#b5b5b5] bg-[#a0a0a0]">
          <svg viewBox="0 0 26 24" className="h-6 w-[26px]"><path d="M3 2h7l2 2h10v8H3z" fill="#d8b258" /><path d="M5 1h4v4H5zM14 2h6v4h-6z" fill="#f8efe0" /><path d="M1 6h23v16H1z" fill="#f2d98c" /><path d="M1 6h23v5H1z" fill="#f8e8b0" /><path d="M4 23v-8h18v8h-4v-4H8v4z" fill="#8ad6ea" /></svg>
        </button>
        <button type="button" aria-label="Media Player" className={item}><svg viewBox="0 0 22 22" className="h-[22px] w-[22px]"><path d="M2 2l18 1v16l-3 3-15-2z" fill="#9ecde4" /><path d="M2 2l14 1v18L2 20z" fill="#d6e9f2" /><circle cx="9.500" cy="11" r="7" fill="#e8641e" /><path d="M7 6.500l7 4.500-7 4.500z" fill="#fff" /></svg></button>
        <button type="button" aria-label="Internet Explorer" className={`${item} ml-0.5`}>
          <svg viewBox="0 0 24 24" className="h-6 w-6"><path d="M19 17.500A7.500 7.500 0 1120 13H6" fill="none" stroke="#5cc9f4" strokeWidth="4" /><path d="M3 22C-1 20 6 9 14 4c5-3 9-3 8 1" fill="none" stroke="#f2b632" strokeWidth="2" /></svg>
        </button>
        <button type="button" aria-label="Excel" className={item}><Office c="#1f7544" letter="X"><path d="M12 6h8M12 9h8M12 12h8M16 4v12" stroke="#1f7544" /></Office></button>
        <button type="button" aria-label="OneNote" className={item}><Office c="#7b3a8c" letter="N"><path d="M17 4v12M17 8h4M17 12h4" stroke="#7b3a8c" /></Office></button>
        <button type="button" aria-label="Chrome" className={item}>
          <svg viewBox="0 0 24 24" className="h-[22px] w-[22px]"><circle cx="12" cy="12" r="11.500" fill="#f7cf3c" /><path d="M12 12L2 6a11.500 11.500 0 0120 0z" fill="#d9402f" /><path d="M12 12L2 6a11.500 11.500 0 009 17.500l5-9z" fill="#3fa556" /><path d="M12 6.500h10.400A11.500 11.500 0 002 6l5 7z" fill="#d9402f" /><circle cx="12" cy="12" r="5.500" fill="#fff" /><circle cx="12" cy="12" r="4.300" fill="#4b8de8" /></svg>
        </button>
        <button type="button" aria-label="Outlook" className={item}><Office c="#1487cf" letter="O" x={2}><path d="M12 6l4 4 4-4" stroke="#1487cf" fill="none" strokeWidth="1.500" /></Office></button>
        <button type="button" aria-label="Word" className={item}><Office c="#2c5ba0" letter="W" x={1}><path d="M13 6h6M13 8.500h6M13 11h6M13 13.500h6" stroke="#7ea0d2" /></Office></button>
        <button type="button" aria-label="PowerPoint" className="ml-px flex w-9 items-center justify-center border border-[#b5b5b5] bg-[#999]"><Office c="#c0301f" letter="P"><path d="M13 7h6M13 11h6M13 13.500h6" stroke="#c0301f" strokeWidth="1.500" /></Office></button>
        <button type="button" aria-label="AutoCAD" className="ml-0.5 flex w-[37px] items-center justify-center border border-[#ddd] bg-[#c4c4c4]">
          <svg viewBox="0 0 24 24" className="h-6 w-6"><rect width="24" height="24" fill="#fbeaec" /><path d="M4 20L10 4h5l5 14-4 1-1-3h-5l-1 4z" fill="#a5122c" /><path d="M12.500 8l2 5h-4z" fill="#fbeaec" /></svg>
        </button>
      </div>
      <div className="flex h-full w-[190px] shrink-0 items-center bg-linear-to-r from-[#25304a] via-[#45393b] to-[#4f4a4a] pl-2.5 text-[9px]">
        <span className="flex h-[15px] w-8 items-center justify-center border border-[#b9d6b5] bg-linear-to-b from-[#3cb54a] to-[#15802a]">95%</span>
        <span className="h-2 w-0.5 bg-[#b9d6b5]" />
        <svg viewBox="0 0 14 12" className="ml-1.5 h-3 w-3.5"><path d="M4 2h6l2 2v4l-2 2H4L2 8V4z" fill="#222" stroke="#ddd" strokeWidth="1.300" /><path d="M0 6h5M9 4h4M9 8h4" stroke="#ddd" strokeWidth="1.300" /></svg>
        <svg viewBox="0 0 6 4" className="ml-3 h-1 w-1.5"><path d="M0 4h6L3 0z" fill="#fff" /></svg>
        <svg viewBox="0 0 12 12" className="ml-3 h-3 w-3"><path d="M1 0h1v12H1zM2 1c3-1 4 1 8 0v6c-4 1-5-1-8 0z" fill="#fff" /><circle cx="9" cy="9" r="3" fill="#c8202c" /><path d="M8 8l2 2M10 8l-2 2" stroke="#fff" /></svg>
        <svg viewBox="0 0 12 12" className="ml-1.5 h-3 w-3"><path d="M0 4h2l4-4v12L2 8H0z" fill="#fff" /><path d="M8 3c1 2 1 4 0 6M10 1c2 3 2 7 0 10" fill="none" stroke="#fff" /></svg>
        <time className="flex flex-1 flex-col items-center leading-[13px]"><span>11:13 PM</span><span>2/21/2018</span></time>
        <button type="button" aria-label="Show desktop" className="h-full w-1.5 border-l border-[#999] bg-[#666]" />
      </div>
    </footer>
  );
}

export default function App() {
  return (
    <div className="flex min-h-screen flex-col overflow-hidden bg-[#373737] font-[Lato,'Noto_Sans',sans-serif]">
      <Header />
      <FileTabs />
      <div className="h-[3px] bg-[#555]" />
      <main className="flex flex-1">
        <Properties />
        <Viewport />
      </main>
      <StatusArea />
      <Taskbar />
    </div>
  );
}
